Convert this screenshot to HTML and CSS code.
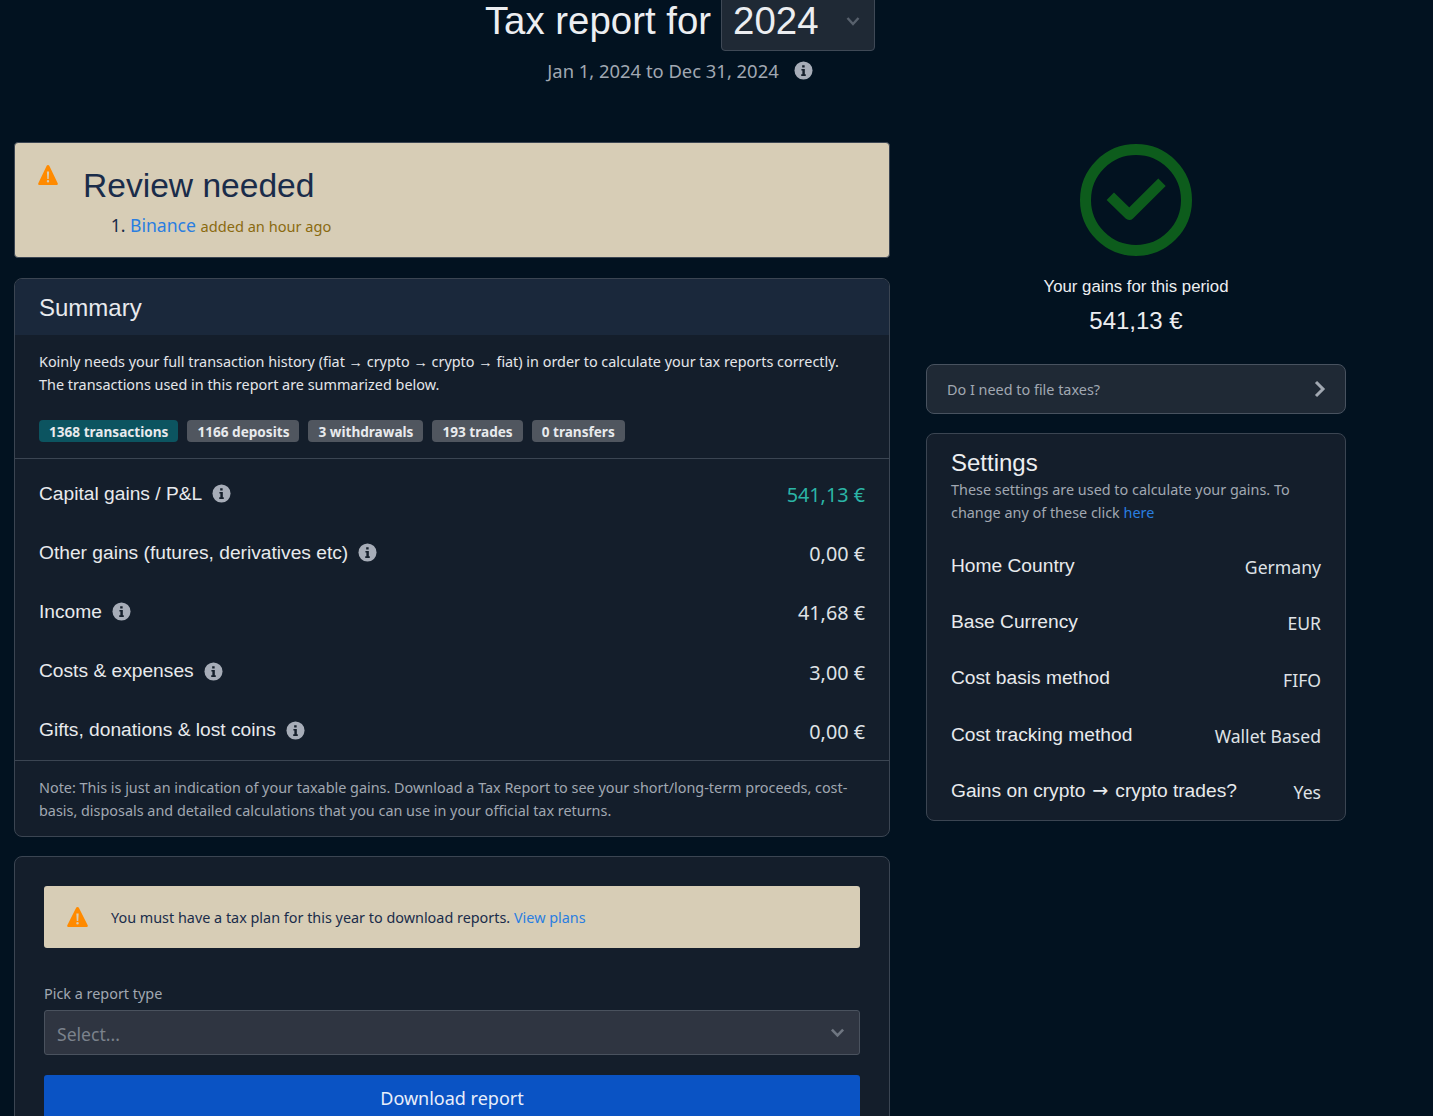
FILE: index.html
```html
<!DOCTYPE html>
<html lang="en">
<head>
<meta charset="utf-8">
<title>Tax report</title>
<link rel="stylesheet" href="styles.css">
</head>
<body>
<div class="page">
  <header class="head">
    <div class="title-row">
      <h1 class="title">Tax report for</h1>
      <div class="year"><span>2024</span>
        <svg class="year-chev" viewBox="0 0 16 16"><path d="M2.500 5l5.500 6 5.500-6" fill="none" stroke="currentColor" stroke-width="2.400"/></svg>
      </div>
    </div>
    <div class="period"><span>Jan 1, 2024 to Dec 31, 2024</span>
      <svg class="info info-lg" viewBox="0 0 20 20"><use href="#i-info"/></svg>
    </div>
  </header>

  <div class="columns">
    <main class="left">
      <section class="review">
        <svg class="warn warn-review" viewBox="0 0 20 20"><use href="#i-warn"/></svg>
        <div>
          <h2 class="review-title">Review needed</h2>
          <ol class="review-list"><li><a class="link" href="#">Binance</a> <small class="ago">added an hour ago</small></li></ol>
        </div>
      </section>

      <section class="card summary">
        <div class="card-head">Summary</div>
        <div class="intro">
          <p>Koinly needs your full transaction history (fiat → crypto → crypto → fiat) in order to calculate your tax reports correctly.<br>The transactions used in this report are summarized below.</p>
          <div class="badges">
            <span class="badge badge-teal">1368 transactions</span>
            <span class="badge">1166 deposits</span>
            <span class="badge">3 withdrawals</span>
            <span class="badge">193 trades</span>
            <span class="badge">0 transfers</span>
          </div>
        </div>
        <div class="rows">
          <div class="row"><span class="label">Capital gains / P&amp;L<svg class="info" viewBox="0 0 20 20"><use href="#i-info"/></svg></span><span class="amount amount-gain">541,13 €</span></div>
          <div class="row"><span class="label">Other gains (futures, derivatives etc)<svg class="info" viewBox="0 0 20 20"><use href="#i-info"/></svg></span><span class="amount">0,00 €</span></div>
          <div class="row"><span class="label">Income<svg class="info" viewBox="0 0 20 20"><use href="#i-info"/></svg></span><span class="amount">41,68 €</span></div>
          <div class="row"><span class="label">Costs &amp; expenses<svg class="info" viewBox="0 0 20 20"><use href="#i-info"/></svg></span><span class="amount">3,00 €</span></div>
          <div class="row"><span class="label">Gifts, donations &amp; lost coins<svg class="info" viewBox="0 0 20 20"><use href="#i-info"/></svg></span><span class="amount">0,00 €</span></div>
        </div>
        <p class="note">Note: This is just an indication of your taxable gains. Download a Tax Report to see your short/long-term proceeds, cost-basis, disposals and detailed calculations that you can use in your official tax returns.</p>
      </section>

      <section class="card download">
        <div class="plan">
          <svg class="warn warn-plan" viewBox="0 0 20 20" preserveAspectRatio="none"><use href="#i-warn"/></svg>
          <span>You must have a tax plan for this year to download reports. <a class="link" href="#">View plans</a></span>
        </div>
        <label class="field-label">Pick a report type</label>
        <div class="select"><span>Select...</span>
          <svg class="select-chev" viewBox="0 0 16 16"><path d="M2 5l6 6 6-6" fill="none" stroke="currentColor" stroke-width="2.800"/></svg>
        </div>
        <button class="download-btn" type="button">Download report</button>
      </section>
    </main>

    <aside class="right">
      <div class="gains">
        <svg class="check" viewBox="0 0 112 112">
          <circle cx="56" cy="56" r="50.500" fill="none" stroke="#0d5c1c" stroke-width="11"/>
          <path d="M30.300 52.300L49.300 70.800 82 38.300" fill="none" stroke="#0d5c1c" stroke-width="10.500" stroke-linejoin="round"/>
        </svg>
        <div class="gains-label">Your gains for this period</div>
        <div class="gains-value">541,13 €</div>
      </div>
      <a class="file-taxes" href="#"><span>Do I need to file taxes?</span>
        <svg class="file-chev" viewBox="0 0 14 20"><path d="M3 3l7 7-7 7" fill="none" stroke="currentColor" stroke-width="3"/></svg>
      </a>
      <section class="settings">
        <h3 class="settings-title">Settings</h3>
        <p class="settings-text">These settings are used to calculate your gains. To change any of these click <a class="link-here" href="#">here</a></p>
        <div class="setting"><span class="label">Home Country</span><span class="setting-val">Germany</span></div>
        <div class="setting"><span class="label">Base Currency</span><span class="setting-val">EUR</span></div>
        <div class="setting"><span class="label">Cost basis method</span><span class="setting-val">FIFO</span></div>
        <div class="setting"><span class="label">Cost tracking method</span><span class="setting-val">Wallet Based</span></div>
        <div class="setting"><span class="label"><span>Gains on crypto <span class="arrow">→</span> crypto trades?</span></span><span class="setting-val">Yes</span></div>
      </section>
    </aside>
  </div>
</div>

<svg class="defs" width="0" height="0">
  <defs>
    <symbol id="i-info" viewBox="0 0 20 20">
      <circle cx="10" cy="10" r="9.500" fill="#a7adb8"/>
      <path d="M8.600 4.400h2.600v2.400H8.600zM7.800 8.400h3.600v5.600h1v1.700H7.600V14h1.200v-3.900h-1z" fill="#16202c"/>
    </symbol>
    <symbol id="i-warn" viewBox="0 0 20 20">
      <path fill-rule="evenodd" fill="#ff8a00" d="M10 0c.6 0 1 .3 1.300.8l8.400 17.400c.4.800-.2 1.800-1.100 1.800H1.400c-.9 0-1.500-1-1.100-1.800L8.700.8C9 .3 9.400 0 10 0zM8.900 6.500l.4 7.500h1.400l.4-7.500zM10 15a1.200 1.200 0 1 0 0 2.400 1.200 1.200 0 0 0 0-2.400z"/>
    </symbol>
  </defs>
</svg>
</body>
</html>
```

FILE: styles.css
```css
* { box-sizing: border-box; }
html, body { margin: 0; height: 1116px; overflow: hidden; }
body {
  background: #021220;
  color: #e8eaed;
  font-family: "Noto Sans", sans-serif;
  font-size: 14.4px;
}
p { margin: 0; }
.defs { position: absolute; }
.page { width: 1332px; margin: -9px 0 0 14px; }

.head { display: flex; flex-direction: column; align-items: center; height: 151px; }
.title-row { display: flex; align-items: center; gap: 10px; height: 60px; }
.title { margin: 0; font: 400 38.400px/60px "Liberation Sans", sans-serif; color: #eceef1; }
.year {
  width: 154px; height: 60px; padding: 0 13px 0 11px;
  display: flex; align-items: center; justify-content: space-between;
  background: #1f2935; border: 1px solid #3f4956; border-radius: 0 0 4px 4px;
  font: 400 38.400px/1 "Liberation Sans", sans-serif; color: #eceef1;
}
.year-chev { width: 16px; height: 16px; color: #58616d; }
.period { display: flex; align-items: center; gap: 15px; margin-top: 8px; height: 22px; color: #a1a8b2; font-size: 18.400px; }
.info { width: 19px; height: 19px; margin-left: 10px; flex: none; }
.info-lg { margin-left: 0; }

.columns { display: flex; align-items: flex-start; gap: 36px; }
.left { width: 876px; display: flex; flex-direction: column; gap: 20px; }
.right { width: 420px; }

.review {
  height: 116px; display: flex; gap: 24px; padding: 21px 23px;
  background: #d7cdb6; border: 1px solid #3b4552; border-radius: 4px;
}
.warn-review { width: 20px; height: 20px; flex: none; margin: 1px 1px 0 0; }
.review-title { margin: 1px 0 0; font: 400 33.600px/42px "Liberation Sans", sans-serif; color: #1a2c4a; }
.review-list { margin: 6px 0 0; padding-left: 47px; font-size: 17.600px; line-height: 24px; color: #1a2c4a; }
.link { color: #2a7ee0; text-decoration: none; }
.ago { color: #8a6a10; font-size: 14.600px; }

.card { background: #141e2b; border: 1px solid #3b4552; border-radius: 8px; overflow: hidden; }
.summary { margin-bottom: -1px; }
.card-head {
  height: 56px; padding: 1px 24px 0; background: #1a283b;
  font: 400 24px/56px "Liberation Sans", sans-serif; color: #e8eaed;
}
.intro { padding: 15px 24px 16px; line-height: 23px; color: #e4e6ea; border-bottom: 1px solid #3b4552; }
.badges { display: flex; gap: 9px; margin-top: 24px; }
.badge {
  padding: 0 10px; height: 22px; border-radius: 4px; background: #50565f;
  font-size: 13.600px; font-weight: 700; line-height: 24px; color: #e8eaed;
}
.badge-teal { background: #0c5460; }
.rows { padding: 5px 24px 0; border-bottom: 1px solid #3b4552; height: 302px; }
.row { display: flex; justify-content: space-between; align-items: center; height: 59.200px; }
.label { display: inline-flex; align-items: center; font: 400 19.200px/24px "Liberation Sans", sans-serif; color: #e8eaed; }
.arrow { margin: 0 1.600px; font-family: "DejaVu Sans", sans-serif; }
.amount { padding-top: 2px; font-size: 19.800px; color: #dfe2e6; }
.amount-gain { color: #2bb5a6; }
.note { padding: 15px 24px 14px; line-height: 23px; color: #a1a8b2; }

.download { padding: 29px 29px 40px; }
.plan {
  height: 62px; padding: 0 23px; display: flex; align-items: center; gap: 23px;
  background: #d7cdb6; border-radius: 3px; color: #1a2c4a;
}
.warn-plan { width: 21px; height: 20px; flex: none; }
.field-label { display: block; margin: 36px 0 6px; color: #a1a8b2; line-height: 20px; }
.select {
  height: 45px; padding: 0 14px 0 12px; display: flex; align-items: center; justify-content: space-between;
  background: #2f3541; border: 1px solid #4a525e; border-radius: 3px;
  font-size: 17.600px; color: #7b828c;
}
.select span { padding-top: 3px; }
.select-chev { width: 15px; height: 15px; color: #6f7681; }
.download-btn {
  display: block; width: 100%; height: 46px; margin-top: 20px; border: 0; border-radius: 3px;
  background: #0a53c4; color: #e8eefa; font-family: "Noto Sans", sans-serif; font-size: 18px;
}

.gains { display: flex; flex-direction: column; align-items: center; padding-top: 2px; }
.check { width: 112px; height: 112px; }
.gains-label { margin-top: 20px; font: 400 16.800px/22px "Liberation Sans", sans-serif; color: #eceef1; }
.gains-value { margin-top: 9px; font: 400 24px/28px "Liberation Sans", sans-serif; color: #eceef1; }
.file-taxes {
  display: flex; align-items: center; justify-content: space-between;
  height: 50px; margin-top: 29px; padding: 0 18px 0 20px;
  background: #1f2935; border: 1px solid #48525f; border-radius: 8px;
  color: #a1a8b2; text-decoration: none;
}
.file-chev { width: 14px; height: 20px; color: #a1a8b2; }
.settings { margin-top: 19px; height: 388px; padding: 14px 24px 0; background: #141e2b; border: 1px solid #3b4552; border-radius: 8px; }
.settings-title { margin: 0; font: 400 24px/30px "Liberation Sans", sans-serif; color: #eceef1; }
.settings-text { margin-top: 0; margin-bottom: 13.400px; line-height: 23px; color: #a1a8b2; }
.link-here { color: #2a7ee0; text-decoration: none; }
.setting { display: flex; justify-content: space-between; align-items: center; height: 56.400px; }
.setting-val { padding-top: 2.400px; font-size: 17.600px; color: #dfe2e6; }
```
